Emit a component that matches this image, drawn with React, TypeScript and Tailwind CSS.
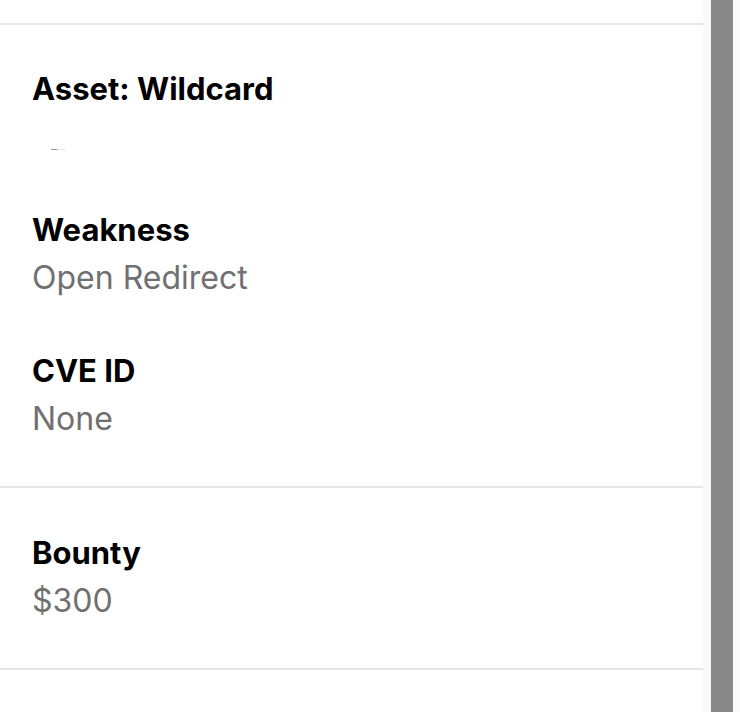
import React from 'react';

interface FieldProps {
  label: string;
  value?: string;
}

const Field: React.FC<FieldProps> = ({ label, value }) => {
  return (
    <div>
      <div className="text-[31px] leading-[40px] font-bold text-black">{label}</div>
      {value ? (
        <div className="mt-2 text-[32px] leading-[40px] text-[#707070]">{value}</div>
      ) : (
        // asset value is clipped in the original, only a sliver shows
        <div className="mt-2 h-10 pl-[19px] pt-[32px]">
          <div className="flex h-px">
            <div className="w-[6px] bg-[#9a9a9a]" />
            <div className="w-[8px] bg-[#e4e4e4]" />
          </div>
        </div>
      )}
    </div>
  );
};

const App: React.FC = () => {
  return (
    <div
      className="flex h-screen w-full overflow-hidden bg-white"
      style={{ fontFamily: 'Inter, "Noto Sans", sans-serif' }}
    >
      <div className="w-[703px] shrink-0">
        <div className="h-[25px] border-b-2 border-[#e6e6e6]" />
        <div className="flex flex-col gap-[53px] border-b-2 border-[#e6e6e6] pl-8 pt-11 pb-[47px]">
          <Field label="Asset: Wildcard" />
          <Field label="Weakness" value="Open Redirect" />
          <Field label="CVE ID" value="None" />
        </div>
        <div className="border-b-2 border-[#e6e6e6] pl-8 pt-[45px] pb-[47px]">
          <Field label="Bounty" value="$300" />
        </div>
      </div>
      <div className="flex flex-1 bg-[#fafafa] pl-2 pr-[7px]">
        <div className="flex-1 bg-[#888888]" />
      </div>
    </div>
  );
};

export default App;
